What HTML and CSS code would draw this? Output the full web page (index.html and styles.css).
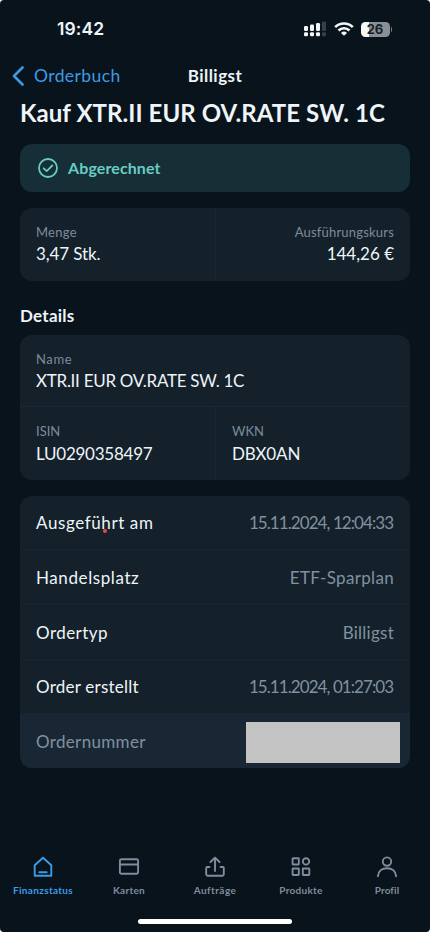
FILE: index.html
```html
<!DOCTYPE html>
<html lang="de">
<head>
<meta charset="utf-8">
<meta name="viewport" content="width=device-width, initial-scale=1">
<title>Kauf XTR.II EUR OV.RATE SW. 1C</title>
<link rel="stylesheet" href="styles.css">
</head>
<body>
<div class="phone">
  <div class="status-bar">
    <span class="time">19:42</span>
    <div class="indicators">
      <svg class="signal" width="22" height="16" viewBox="0 0 22 16" fill="#f3f6f8">
        <rect x="0" y="5" width="4" height="5" rx="1.2"/><rect x="6" y="3.500" width="4" height="6.500" rx="1.2"/><rect x="12" y="2" width="4" height="8" rx="1.2"/><rect x="18" y="0.500" width="4" height="9.500" rx="1.2" fill="#354049"/>
        <rect x="0" y="11.300" width="4" height="4" rx="1.2"/><rect x="6" y="11.300" width="4" height="4" rx="1.2"/><rect x="12" y="11.300" width="4" height="4" rx="1.2"/><rect x="18" y="11.300" width="4" height="4" rx="1.2" fill="#354049"/>
      </svg>
      <svg class="wifi" width="20" height="14" viewBox="0 0 20 14" fill="none" stroke="#f3f6f8" stroke-width="2.700">
        <path d="M1.200 5.100a12.600 12.600 0 0 1 17.600 0"/><path d="M4.500 8.500a7.900 7.900 0 0 1 11 0"/><path d="M10 13.800 7 10.900a4.300 4.300 0 0 1 6 0z" fill="#f3f6f8" stroke="none"/>
      </svg>
      <div class="battery"><span>26</span></div><i class="battery-cap"></i>
    </div>
  </div>
  <header class="nav">
    <a class="back"><svg width="12" height="20" viewBox="0 0 12 20" fill="none" stroke="#3d9be6" stroke-width="2.600" stroke-linecap="round" stroke-linejoin="round"><path d="M10.500 1.500 2 10l8.500 8.500"/></svg><span class="back-label">Orderbuch</span></a>
    <span class="nav-title">Billigst</span>
  </header>
  <main>
    <h1><span class="headline">Kauf XTR.II EUR OV.RATE SW. 1C</span></h1>
    <div class="notice">
      <svg width="20" height="20" viewBox="0 0 20 20" fill="none" stroke="#68cbc5" stroke-width="1.800" stroke-linecap="round" stroke-linejoin="round"><circle cx="10" cy="10" r="9"/><path d="m5.700 10.300 3 2.800 5.600-5.600"/></svg>
      <span class="notice-text">Abgerechnet</span>
    </div>
    <section class="card pair">
      <div class="cell"><span class="label l-menge">Menge</span><span class="value v-menge">3,47 Stk.</span></div>
      <div class="cell right"><span class="label l-kurs">Ausführungskurs</span><span class="value v-kurs">144,26 €</span></div>
    </section>
    <h2><span class="details">Details</span></h2>
    <section class="card">
      <div class="cell name"><span class="label l-name">Name</span><span class="value v-name">XTR.II EUR OV.RATE SW. 1C</span></div>
      <div class="pair">
        <div class="cell"><span class="label l-isin">ISIN</span><span class="value v-isin">LU0290358497</span></div>
        <div class="cell"><span class="label l-wkn">WKN</span><span class="value v-wkn">DBX0AN</span></div>
      </div>
    </section>
    <section class="card rows">
      <div class="row"><span class="key k-executed">Ausgeführt am<i class="dot"></i></span><span class="data date">15.11.2024, 12:04:33</span></div>
      <div class="row"><span class="key k-place">Handelsplatz</span><span class="data d-place">ETF-Sparplan</span></div>
      <div class="row"><span class="key k-type">Ordertyp</span><span class="data d-type">Billigst</span></div>
      <div class="row"><span class="key k-created">Order erstellt</span><span class="data date">15.11.2024, 01:27:03</span></div>
      <div class="row muted"><span class="key k-number">Ordernummer</span><span class="redacted"></span></div>
    </section>
  </main>
  <nav class="tabs">
    <a class="tab active"><svg width="22" height="22" viewBox="0 0 22 22"><path d="M2.700 9.300 11 1.700l8.300 7.600v10.500H2.700z"/><path d="M7.300 16.300h7.400"/></svg><span class="t-home">Finanzstatus</span></a>
    <a class="tab"><svg width="22" height="22" viewBox="0 0 22 22"><rect x="1.900" y="3.200" width="18.200" height="14.600" rx="1.500"/><path d="M1.900 8.500h18.200"/></svg><span class="t-cards">Karten</span></a>
    <a class="tab"><svg width="22" height="22" viewBox="0 0 22 22"><path d="M5.500 11H3.200a1 1 0 0 0-1 1v6.300a1.500 1.500 0 0 0 1.500 1.500h14.600a1.500 1.500 0 0 0 1.500-1.500V12a1 1 0 0 0-1-1h-2.300M11 15V1.800M6.500 6 11 1.600 15.500 6"/></svg><span class="t-orders">Aufträge</span></a>
    <a class="tab"><svg width="22" height="22" viewBox="0 0 22 22"><rect x="2.600" y="2.300" width="6.200" height="6.200" rx=".5"/><circle cx="16" cy="5.400" r="3.200"/><rect x="2.600" y="12.500" width="6.200" height="6.500" rx=".5"/><rect x="12.800" y="12.500" width="6.500" height="6.500" rx=".5"/></svg><span class="t-products">Produkte</span></a>
    <a class="tab"><svg width="22" height="22" viewBox="0 0 22 22"><circle cx="11" cy="5.600" r="4.200"/><path d="M1.900 20.200C2.200 14.900 6 12.200 11 12.200s8.800 2.700 9.100 8"/></svg><span class="t-profile">Profil</span></a>
  </nav>
  <div class="home-indicator"></div>
</div>
</body>
</html>
```

FILE: styles.css
```css
* { box-sizing: border-box; }
body { margin: 0; background: #fff; font-family: Lato, "Open Sans", sans-serif; }
.phone { height: 932px; display: flex; flex-direction: column; overflow: hidden; background: #08131b; border-radius: 4px; color: #eef4f8; white-space: nowrap; }
.status-bar { height: 54px; padding: 4px 38px 0 57px; display: flex; justify-content: space-between; align-items: center; }
.time { font: 600 17.500px/22px Inter, sans-serif; letter-spacing: .1px; }
.indicators { display: flex; align-items: center; }
.signal { margin-right: 1px; }
.wifi { margin: 0 7px 0 7px; }
.battery { width: 29px; height: 15px; border-radius: 4.500px; background: linear-gradient(90deg, #f5f7f8 0 26%, #8a9095 26%); color: #17212a; font: 700 13px/15px Inter, sans-serif; text-align: center; }
.battery-cap { width: 1.500px; height: 5px; margin-left: 1px; border-radius: 0 2px 2px 0; background: #70787d; }
.nav { height: 44px; padding: 0 12px 1px; display: grid; grid-template-columns: 1fr auto 1fr; align-items: center; }
.back { display: flex; align-items: center; gap: 10px; color: #3d9be6; font-size: 17.500px; }
.back-label { letter-spacing: .4px; }
.nav-title { font-size: 17px; font-weight: 700; letter-spacing: .45px; }
main { padding: 0 20px; }
h1 { height: 46px; margin: 0; font-size: 24px; line-height: 30px; font-weight: 700; letter-spacing: .06px; }
.notice { height: 48px; padding: 0 18px; display: flex; align-items: center; gap: 10px; border-radius: 12px; background: #162e35; color: #68cbc5; font-size: 16px; font-weight: 700; }
.notice-text { letter-spacing: .1px; margin-top: -1px; }
.card { border-radius: 12px; background: #14212a; overflow: hidden; }
.notice + .card { margin-top: 16px; }
.pair { display: grid; grid-template-columns: 1fr 1fr; }
.cell { height: 72.500px; padding: 15px 16px 0; display: flex; flex-direction: column; align-items: flex-start; }
.pair .cell + .cell { border-left: 1px solid #182732; }
.cell.right { align-items: flex-end; }
.cell.name { border-bottom: 1px solid #192833; }
.label { height: 20px; color: #7b8c9c; font-size: 13px; line-height: 19px; }
.value { height: 22px; font-size: 17px; line-height: 22px; }
.l-menge { letter-spacing: .25px; }
.l-kurs { letter-spacing: .2px; }
.v-menge { letter-spacing: -.1px; }
.l-name { letter-spacing: .6px; }
.v-name { letter-spacing: -.28px; }
.v-isin { letter-spacing: -.25px; }
.v-wkn { letter-spacing: -.15px; }
.card .pair .value { line-height: 23px; }
h2 { height: 54px; margin: 0; padding-top: 24px; font-size: 17px; line-height: 22px; font-weight: 700; letter-spacing: .25px; }
.rows { margin-top: 16px; }
.row { height: 54.700px; padding: 1px 16px 0; display: flex; justify-content: space-between; align-items: center; border-bottom: 1px solid #182631; font-size: 17px; }
.row.muted { height: 53.700px; padding-right: 10px; border: 0; background: #182733; }
.key { position: relative; }
.k-executed, .k-place { letter-spacing: .6px; }
.k-type { letter-spacing: .45px; }
.k-created { letter-spacing: .23px; }
.k-number { letter-spacing: .33px; }
.data, .muted .key { color: #8091a1; }
.date { letter-spacing: -.93px; margin-right: .9px; }
.d-place { letter-spacing: .33px; }
.d-type { letter-spacing: .25px; }
.dot { position: absolute; left: 67px; bottom: 0; width: 4px; height: 4px; border-radius: 50%; background: #e34743; }
.redacted { width: 154px; height: 41px; margin-top: 2px; background: #c3c3c3; }
.tabs { height: 62px; margin-top: 88px; padding: 0; display: grid; grid-template-columns: repeat(5, 86px); }
.tab { display: flex; flex-direction: column; align-items: center; color: #7d8d9e; font-size: 10px; line-height: 14px; font-weight: 700; }
.tab svg { margin-bottom: 5px; fill: none; stroke: currentColor; stroke-width: 1.900; stroke-linecap: round; stroke-linejoin: round; }
.t-home { letter-spacing: .35px; }
.t-cards, .t-products { letter-spacing: .28px; }
.t-orders { letter-spacing: .45px; }
.t-profile { letter-spacing: .1px; }
.active { color: #3d9be6; }
.home-indicator { width: 154px; height: 5px; margin: 1px auto 0; flex-shrink: 0; border-radius: 3px; background: #fff; }
```
